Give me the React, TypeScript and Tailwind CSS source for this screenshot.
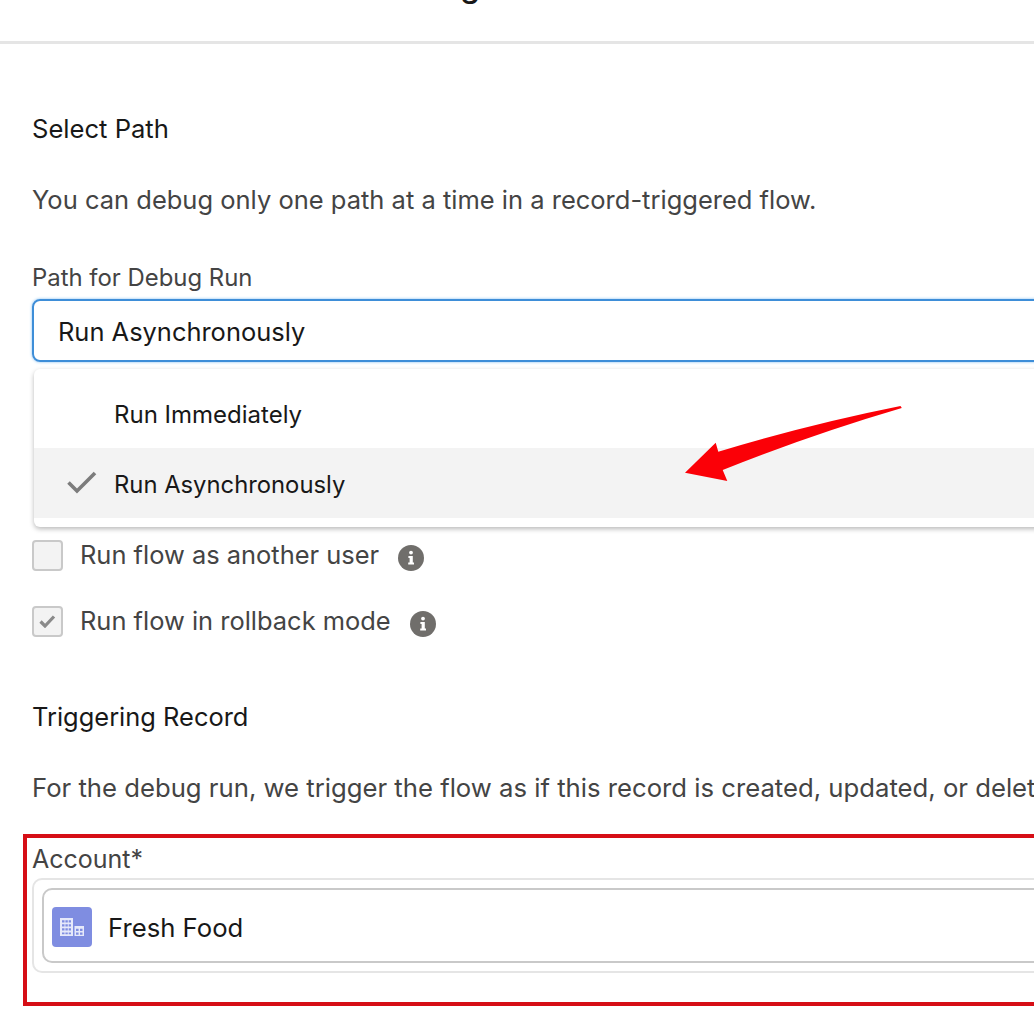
export default function App() {
  const font = { fontFamily: "Inter, sans-serif" };
  return (
    <div className="relative w-[1034px] h-[1016px] overflow-hidden bg-white" style={font}>
      <div className="h-[44px] border-b-[3px] border-[#e5e5e5] overflow-hidden">
        <div className="-mt-[34px] pr-[94px] text-center text-[32px] leading-[40px] font-medium text-[#181818] whitespace-nowrap">Debug Flow</div>
      </div>
      <div className="w-[1200px] pl-[32px] text-[25.45px] leading-[30px] whitespace-nowrap">
        <h2 className="mt-[70px] text-[#181818] text-[25.6px]">Select Path</h2>
        <p className="mt-[41px] text-[#444444] text-[25.5px]">You can debug only one path at a time in a record-triggered flow.</p>
        <label className="block mt-[48px] text-[#444444] text-[23.9px]">Path for Debug Run</label>
        <div className="mt-[6px] h-[63px] flex items-center pl-[24px] pt-[2px] border-[2.5px] border-[#3e8ed8] rounded-[8px] shadow-[0_0_3px_#7fbcf0] text-[#181818]">Run Asynchronously</div>
        <div className="mt-[7px] ml-[2px] h-[158px] pt-[11px] bg-white rounded-[6px] shadow-[0_2px_5px_rgba(0,0,0,0.28)] text-[#181818] text-[24px]">
          <div className="h-[68px] flex items-center pl-[80px] pt-[2px]">Run Immediately</div>
          <div className="h-[70px] flex items-center bg-[#f3f3f3]">
            <svg className="ml-[32px] mr-[16px] w-[32px] h-[26px] -mt-[3px]" viewBox="0 0 32 26" fill="none">
              <path d="M2.5 13.5 L11 22 L29 4" stroke="#7c7c7c" strokeWidth="3.6" />
            </svg>
            <span className="pt-[4px] text-[23.8px]">Run Asynchronously</span>
          </div>
        </div>
        <div className="mt-[13px] flex items-center h-[30px] text-[#444444]">
          <span className="w-[31px] h-[31px] rounded-[4px] border-2 border-[#c9c9c9] bg-[#f3f3f3] shrink-0" />
          <span className="ml-[17px]">Run flow as another user</span>
          <svg className="ml-[19px] mt-[5px] w-[26px] h-[26px]" viewBox="0 0 26 26">
            <circle cx="13" cy="13" r="13" fill="#706e6b" />
            <circle cx="13" cy="7.6" r="1.9" fill="#fff" />
            <path d="M10.4 11 H14.8 V17.6 H16 V19.6 H10.2 V17.6 H11.6 V13 H10.4 Z" fill="#fff" />
          </svg>
        </div>
        <div className="mt-[36px] flex items-center h-[30px] text-[#444444]">
          <span className="w-[31px] h-[31px] rounded-[4px] border-2 border-[#c9c9c9] bg-[#f3f3f3] shrink-0 flex items-center justify-center">
            <svg className="w-[17px] h-[14px]" viewBox="0 0 17 14" fill="none">
              <path d="M1.5 7.5 L6 12 L15 2.5" stroke="#8a8a8a" strokeWidth="3.2" />
            </svg>
          </span>
          <span className="ml-[17px]">Run flow in rollback mode</span>
          <svg className="ml-[19px] mt-[5px] w-[26px] h-[26px]" viewBox="0 0 26 26">
            <circle cx="13" cy="13" r="13" fill="#706e6b" />
            <circle cx="13" cy="7.6" r="1.9" fill="#fff" />
            <path d="M10.4 11 H14.8 V17.6 H16 V19.6 H10.2 V17.6 H11.6 V13 H10.4 Z" fill="#fff" />
          </svg>
        </div>
        <h2 className="mt-[66px] text-[#181818]">Triggering Record</h2>
        <p className="mt-[41px] text-[#444444] text-[25.7px]">For the debug run, we trigger the flow as if this record is created, updated, or deleted.</p>
        <div className="-ml-[9px] mt-[31px] h-[172px] border-[4px] border-[#d60e16] pl-[5px] pt-[6px]">
          <label className="block text-[#444444] text-[25px]">Account*</label>
          <div className="mt-[4px] h-[95px] border-2 border-[#e5e5e5] rounded-[10px] p-[8px]">
            <div className="h-[75px] border-2 border-[#c9c9c9] rounded-[10px] flex items-center pl-[8px] pt-[3px] text-[#181818] text-[25.7px]">
              <span className="w-[40px] h-[40px] rounded-[4px] bg-[#7f8de1] flex items-center justify-center">
                <svg className="w-[24px] h-[18px]" viewBox="0 0 24 20" preserveAspectRatio="none">
                  <path fillRule="evenodd" fill="#e6e9fa" d="M0 0 H13 V20 H0 Z M2 2.5 V5 H4.5 V2.5 Z M5.4 2.5 V5 H7.8 V2.5 Z M8.7 2.5 V5 H11 V2.5 Z M2 7 V9.5 H4.5 V7 Z M5.4 7 V9.5 H7.8 V7 Z M8.7 7 V9.5 H11 V7 Z M2 11.5 V14 H4.5 V11.5 Z M5.4 11.5 V14 H7.8 V11.5 Z M8.7 11.5 V14 H11 V11.5 Z M2 16 V18 H4.5 V16 Z M5.4 16 V18 H7.8 V16 Z M8.7 16 V18 H11 V16 Z" />
                  <path fillRule="evenodd" fill="#e6e9fa" d="M14.5 9 H24 V20 H14.5 Z M16 12 V14.5 H18.6 V12 Z M20 12 V14.5 H22.5 V12 Z M16 16 V18.5 H18.6 V16 Z M20 16 V18.5 H22.5 V16 Z" />
                </svg>
              </span>
              <span className="ml-[16px] pt-[2px]">Fresh Food</span>
            </div>
          </div>
        </div>
      </div>
      <svg className="absolute left-[680px] top-[400px] w-[230px] h-[90px]" viewBox="680 400 230 90">
        <path d="M685 472.7 L715.7 442.7 L718.3 451.7 Q810 424 900.5 406 L901.8 408 Q810 435 722.7 470 L727.3 481 Z" fill="#fb0007" />
      </svg>
    </div>
  );
}
